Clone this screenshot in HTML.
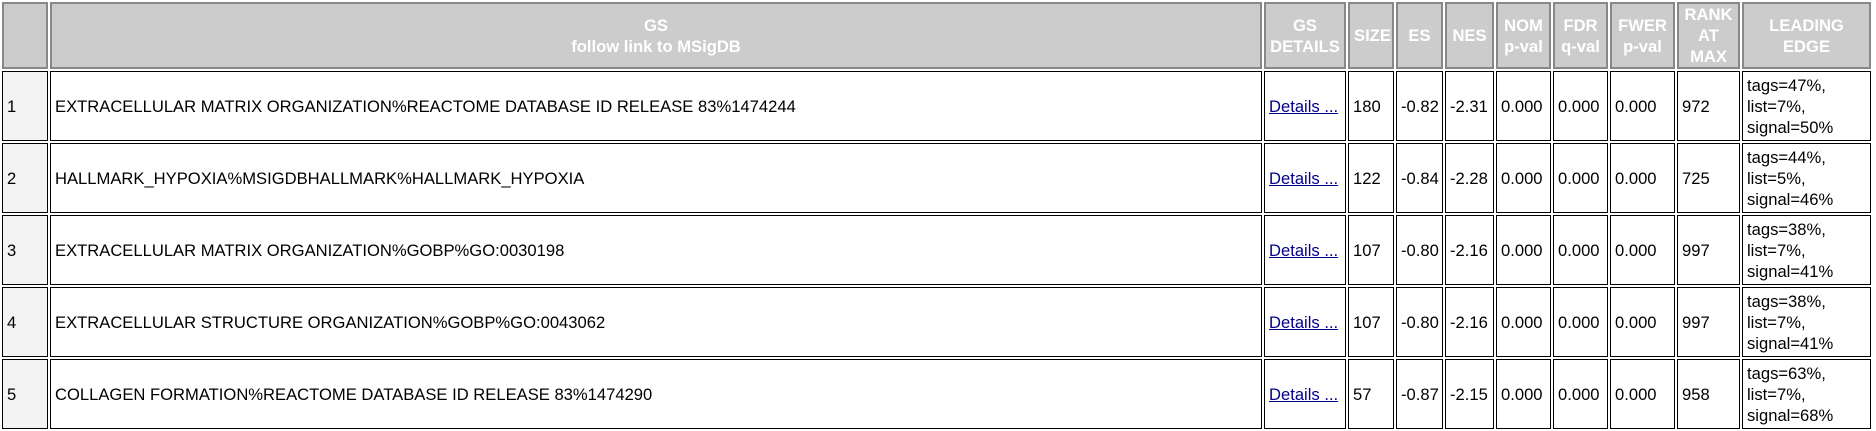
<!DOCTYPE html>
<html><head><style>
body{margin:0;background:#fff;font-family:"Liberation Sans",Arial,sans-serif;font-size:16.6px;}
table{border-collapse:separate;border-spacing:2px;table-layout:fixed;width:1873px;margin:0;}
th,td{box-sizing:border-box;padding:0 4px;}
th{background:#ccc;color:#fff;font-weight:bold;border:2px solid #888;text-align:center;line-height:21px;height:67px;}
td{border:1px solid #000;height:70px;line-height:21px;color:#000;}
td.n{background:#f3f3f3;}
a{color:#00008b;}
</style></head><body>
<table>
<colgroup><col style="width:46px"><col style="width:1212px"><col style="width:82px"><col style="width:46px"><col style="width:47px"><col style="width:49px"><col style="width:55px"><col style="width:55px"><col style="width:65px"><col style="width:63px"><col style="width:129px"></colgroup>
<tr><th></th><th>GS<br>follow link to MSigDB</th><th>GS<br>DETAILS</th><th>SIZE</th><th>ES</th><th>NES</th><th>NOM<br>p-val</th><th>FDR<br>q-val</th><th>FWER<br>p-val</th><th>RANK<br>AT<br>MAX</th><th>LEADING<br>EDGE</th></tr>
<tr><td class="n">1</td><td>EXTRACELLULAR MATRIX ORGANIZATION%REACTOME DATABASE ID RELEASE 83%1474244</td><td><a href="#">Details ...</a></td><td>180</td><td>-0.82</td><td>-2.31</td><td>0.000</td><td>0.000</td><td>0.000</td><td>972</td><td>tags=47%, list=7%, signal=50%</td></tr>
<tr><td class="n">2</td><td>HALLMARK_HYPOXIA%MSIGDBHALLMARK%HALLMARK_HYPOXIA</td><td><a href="#">Details ...</a></td><td>122</td><td>-0.84</td><td>-2.28</td><td>0.000</td><td>0.000</td><td>0.000</td><td>725</td><td>tags=44%, list=5%, signal=46%</td></tr>
<tr><td class="n">3</td><td>EXTRACELLULAR MATRIX ORGANIZATION%GOBP%GO:0030198</td><td><a href="#">Details ...</a></td><td>107</td><td>-0.80</td><td>-2.16</td><td>0.000</td><td>0.000</td><td>0.000</td><td>997</td><td>tags=38%, list=7%, signal=41%</td></tr>
<tr><td class="n">4</td><td>EXTRACELLULAR STRUCTURE ORGANIZATION%GOBP%GO:0043062</td><td><a href="#">Details ...</a></td><td>107</td><td>-0.80</td><td>-2.16</td><td>0.000</td><td>0.000</td><td>0.000</td><td>997</td><td>tags=38%, list=7%, signal=41%</td></tr>
<tr><td class="n">5</td><td>COLLAGEN FORMATION%REACTOME DATABASE ID RELEASE 83%1474290</td><td><a href="#">Details ...</a></td><td>57</td><td>-0.87</td><td>-2.15</td><td>0.000</td><td>0.000</td><td>0.000</td><td>958</td><td>tags=63%, list=7%, signal=68%</td></tr>
</table>
</body></html>
